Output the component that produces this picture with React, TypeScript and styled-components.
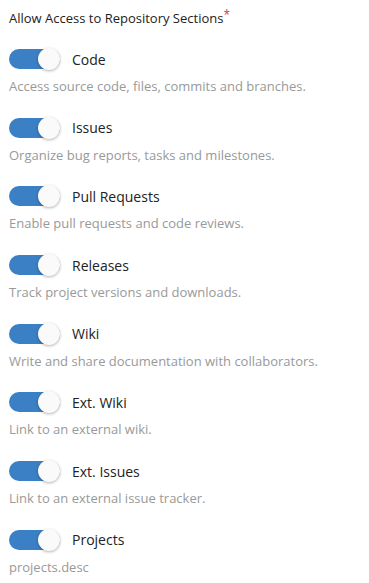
import React from "react";
import styled, { createGlobalStyle } from "styled-components";

const Global = createGlobalStyle`
  html, body { margin: 0; padding: 0; background: #fff; }
  body { font-family: "Open Sans", "Noto Sans", sans-serif; }
`;

const Page = styled.div`
  padding: 8px 9px;
  display: flex;
  flex-direction: column;
`;

const Title = styled.div`
  font-size: 13px;
  line-height: 20px;
  color: #222;
  margin-bottom: 20px;
`;

const Req = styled.span`
  color: #d9363e;
  vertical-align: top;
  font-size: 12px;
  line-height: 14px;
`;

const List = styled.div`
  display: flex;
  flex-direction: column;
  gap: 21.7px;
`;

const Item = styled.div`
  display: flex;
  flex-direction: column;
  gap: 7px;
`;

const Row = styled.div`
  display: flex;
  align-items: center;
  height: 22px;
  gap: 12px;
`;

const Track = styled.div`
  position: relative;
  width: 51px;
  height: 20px;
  border-radius: 10px;
  background: #3b7fc4;
  flex-shrink: 0;
`;

const Knob = styled.div`
  position: absolute;
  right: 0;
  top: -1px;
  width: 22px;
  height: 22px;
  border-radius: 50%;
  background: #fafafa;
  box-shadow: 0 1px 3px rgba(0, 0, 0, 0.3);
`;

const Label = styled.span`
  font-size: 14px;
  color: #222;
`;

const Desc = styled.div`
  font-size: 13px;
  line-height: 18px;
  color: #999;
`;

const items = [
  ["Code", "Access source code, files, commits and branches."],
  ["Issues", "Organize bug reports, tasks and milestones."],
  ["Pull Requests", "Enable pull requests and code reviews."],
  ["Releases", "Track project versions and downloads."],
  ["Wiki", "Write and share documentation with collaborators."],
  ["Ext. Wiki", "Link to an external wiki."],
  ["Ext. Issues", "Link to an external issue tracker."],
  ["Projects", "projects.desc"],
];

export default function App() {
  return (
    <>
      <Global />
      <Page>
        <Title>
          Allow Access to Repository Sections<Req>*</Req>
        </Title>
        <List>
          {items.map(([l, d]) => (
            <Item key={l}>
              <Row>
                <Track>
                  <Knob />
                </Track>
                <Label>{l}</Label>
              </Row>
              <Desc>{d}</Desc>
            </Item>
          ))}
        </List>
      </Page>
    </>
  );
}
